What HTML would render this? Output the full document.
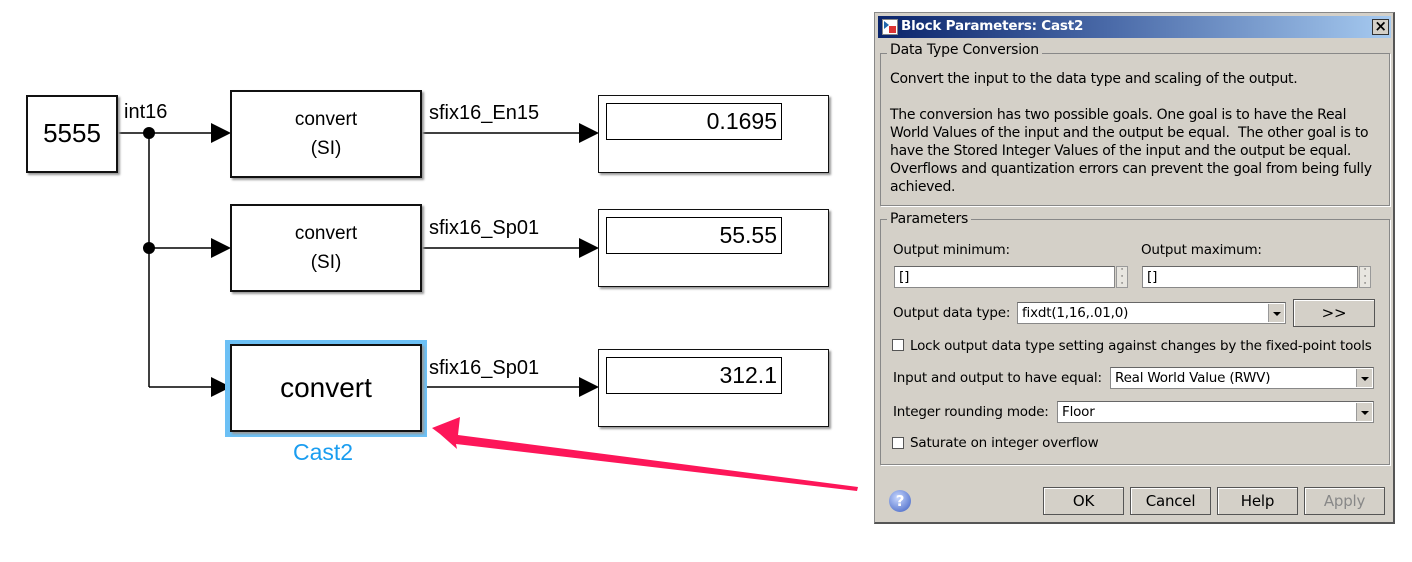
<!DOCTYPE html>
<html><head><meta charset="utf-8"><style>
body{margin:0;width:1412px;height:562px;background:#fff;position:relative;overflow:hidden;font-family:"Liberation Sans",Arial,sans-serif}
.a{position:absolute}
.dlg{font-family:"DejaVu Sans","Liberation Sans",sans-serif;font-size:13.5px;color:#000;letter-spacing:-0.2px}
.blk{position:absolute;border:2px solid #111;background:#fff;box-shadow:2px 2px 2px #999;box-sizing:border-box}
.disp{position:absolute;border:1px solid #000;box-sizing:border-box;font-size:23px;text-align:right;padding-right:4px;line-height:34px}
.lbl{position:absolute;font-size:20px;color:#000}
.inp{position:absolute;background:#fff;border:1px solid #888;border-top-color:#666;box-sizing:border-box;height:22px;line-height:20px;padding-left:4px}
.btn{position:absolute;background:#d4d0c8;border:1px solid #555;box-sizing:border-box;height:28px;text-align:center;line-height:26px;font-size:15px;box-shadow:inset 1px 1px 0 #fff}
.dd{position:absolute;right:1px;top:1px;width:15px;height:18px;background:#d4d0c8;border-left:1px solid #999}
.dd:after{content:"";position:absolute;left:4px;top:8px;border:4px solid transparent;border-top:4px solid #000}
.cb{position:absolute;width:12px;height:12px;background:#fff;border:1px solid #555;box-sizing:border-box}
</style></head><body>
<svg class="a" style="left:0;top:0" width="870" height="562">
<g stroke="#000" stroke-width="1.5" fill="none">
<line x1="117" y1="133" x2="213" y2="133"/>
<line x1="149" y1="133" x2="149" y2="387"/>
<line x1="149" y1="248" x2="213" y2="248"/>
<line x1="149" y1="387" x2="213" y2="387"/>
<line x1="421" y1="133" x2="581" y2="133"/>
<line x1="421" y1="248" x2="581" y2="248"/>
<line x1="421" y1="387" x2="581" y2="387"/>
</g>
<g fill="#000">
<circle cx="149" cy="133" r="6"/><circle cx="149" cy="248" r="6"/>
<polygon points="211,123 231,133 211,143"/><polygon points="211,238 231,248 211,258"/><polygon points="211,377 231,387 211,397"/>
<polygon points="579,123 599,133 579,143"/><polygon points="579,238 599,248 579,258"/><polygon points="579,377 599,387 579,397"/>
</g>
<polygon fill="#fd1659" points="432,428 460,417 458,435 858,487 857,491 456,444 457,449 440,434"/>
</svg>
<div class="blk" style="left:26px;top:95px;width:92px;height:78px;font-size:26px;text-align:center;line-height:72px">5555</div>
<div class="lbl" style="left:124px;top:101px">int16</div>
<div class="blk" style="left:230px;top:90px;width:192px;height:88px;font-size:19px;text-align:center;line-height:29px;padding-top:13px">convert<br>(SI)</div>
<div class="blk" style="left:230px;top:204px;width:192px;height:88px;font-size:19px;text-align:center;line-height:29px;padding-top:13px">convert<br>(SI)</div>
<div class="a" style="left:225px;top:340px;width:202px;height:97px;background:#6cc0f5"></div>
<div class="blk" style="left:230px;top:344px;width:192px;height:88px;font-size:28px;text-align:center;line-height:84px">convert</div>
<div class="a" style="left:293px;top:439px;font-size:23px;color:#1a9df0">Cast2</div>
<div class="lbl" style="left:429px;top:102px">sfix16_En15</div>
<div class="lbl" style="left:429px;top:217px">sfix16_Sp01</div>
<div class="lbl" style="left:429px;top:357px">sfix16_Sp01</div>
<div class="blk" style="left:598px;top:95px;width:231px;height:78px;border-width:1.5px"><div class="disp" style="left:7px;top:7px;width:176px;height:37px">0.1695</div></div>
<div class="blk" style="left:598px;top:209px;width:231px;height:78px;border-width:1.5px"><div class="disp" style="left:7px;top:7px;width:176px;height:37px">55.55</div></div>
<div class="blk" style="left:598px;top:349px;width:231px;height:78px;border-width:1.5px"><div class="disp" style="left:7px;top:7px;width:176px;height:37px">312.1</div></div>

<div class="a dlg" style="left:874px;top:12px;width:521px;height:512px;background:#d4d0c8;border:1px solid #888;box-sizing:border-box;border-bottom:2px solid #555;border-right:2px solid #555">
 <div class="a" style="left:3px;top:3px;width:513px;height:22px;background:linear-gradient(90deg,#0a246a,#4a6aa8 45%,#a6caf0)"></div>
 <div class="a" style="left:7px;top:6px;width:14px;height:14px;background:#fff;border:1px solid #888"><div class="a" style="left:6px;top:6px;width:7px;height:7px;background:#d33"></div><div class="a" style="left:1px;top:1px;width:0;height:0;border:4px solid transparent;border-left:5px solid #26a"></div></div>
 <div class="a" style="left:26px;top:5px;color:#fff;font-weight:bold;font-size:13.5px">Block Parameters: Cast2</div>
 <div class="a" style="left:497px;top:6px;width:17px;height:16px;background:#d4d0c8;border:1px solid #333;box-sizing:border-box;text-align:center;line-height:13px;font-size:15px;font-weight:bold">×</div>
 <div class="a" style="left:5px;top:40px;width:508px;height:151px;border:1px solid #888;box-shadow:1px 1px 0 #fff"></div>
 <div class="a" style="left:12px;top:29px;background:#d4d0c8;padding:0 3px;font-size:14px">Data Type Conversion</div>
 <div class="a" style="left:15px;top:57px;line-height:18px;width:505px;white-space:nowrap;font-size:14px;letter-spacing:-0.3px">Convert the input to the data type and scaling of the output.<br><br>The conversion has two possible goals. One goal is to have the Real<br>World Values of the input and the output be equal.&nbsp; The other goal is to<br>have the Stored Integer Values of the input and the output be equal.<br>Overflows and quantization errors can prevent the goal from being fully<br>achieved.</div>
 <div class="a" style="left:5px;top:206px;width:508px;height:244px;border:1px solid #888;box-shadow:1px 1px 0 #fff"></div>
 <div class="a" style="left:12px;top:198px;background:#d4d0c8;padding:0 3px;font-size:14px">Parameters</div>
 <div class="a" style="left:18px;top:229px">Output minimum:</div>
 <div class="a" style="left:266px;top:229px">Output maximum:</div>
 <div class="inp" style="left:19px;top:253px;width:221px">[]</div>
 <div class="a" style="left:241px;top:253px;width:12px;height:22px;background:#e8e6e0;border:1px solid #999;box-sizing:border-box;text-align:center;font-size:9px;line-height:7px">·<br>·<br>·</div>
 <div class="inp" style="left:267px;top:253px;width:216px">[]</div>
 <div class="a" style="left:484px;top:253px;width:12px;height:22px;background:#e8e6e0;border:1px solid #999;box-sizing:border-box;text-align:center;font-size:9px;line-height:7px">·<br>·<br>·</div>
 <div class="a" style="left:18px;top:292px">Output data type:</div>
 <div class="inp" style="left:142px;top:289px;width:269px">fixdt(1,16,.01,0)<div class="dd"></div></div>
 <div class="btn" style="left:418px;top:286px;width:82px">&gt;&gt;</div>
 <div class="cb" style="left:17px;top:326px"></div>
 <div class="a" style="left:35px;top:325px">Lock output data type setting against changes by the fixed-point tools</div>
 <div class="a" style="left:18px;top:357px">Input and output to have equal:</div>
 <div class="inp" style="left:235px;top:354px;width:264px">Real World Value (RWV)<div class="dd"></div></div>
 <div class="a" style="left:18px;top:391px">Integer rounding mode:</div>
 <div class="inp" style="left:182px;top:388px;width:317px">Floor<div class="dd"></div></div>
 <div class="cb" style="left:17px;top:424px"></div>
 <div class="a" style="left:35px;top:422px">Saturate on integer overflow</div>
 <div class="a" style="left:14px;top:477px;width:22px;height:22px;border-radius:50%;background:radial-gradient(circle at 40% 35%,#c8d8ff,#3a5cc0);color:#fff;text-align:center;line-height:22px;font-weight:bold;font-size:15px">?</div>
 <div class="btn" style="left:168px;top:474px;width:81px">OK</div>
 <div class="btn" style="left:255px;top:474px;width:81px">Cancel</div>
 <div class="btn" style="left:342px;top:474px;width:81px">Help</div>
 <div class="btn" style="left:429px;top:474px;width:81px;color:#888">Apply</div>
</div>
</body></html>
